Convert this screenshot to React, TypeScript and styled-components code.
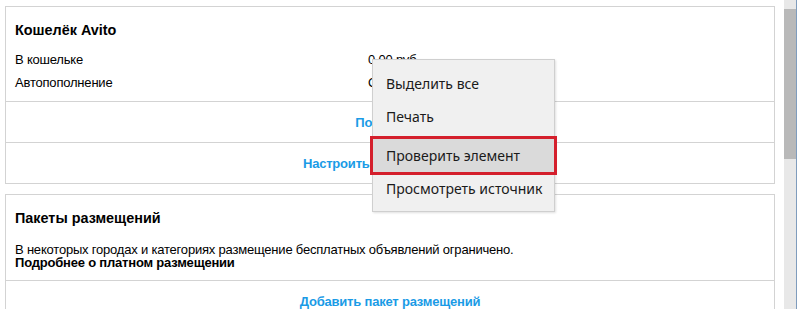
import React from 'react'
import styled, { createGlobalStyle } from 'styled-components'

const GlobalStyle = createGlobalStyle`
    html, body {
        margin: 0;
        padding: 0;
        background: #ffffff;
        overflow: hidden;
    }
    body {
        font-family: "Liberation Sans", Arial, sans-serif;
        font-size: 13px;
        letter-spacing: -0.2px;
        color: #000000;
    }
`

const colors = {
    border: '#d3d3d3',
    link: '#1a9be6',
    text: '#000000',
    menuBg: '#f0f0f0',
    menuBorder: '#cfcfcf',
    hover: '#dadada',
    red: '#d41f2c',
}

interface WalletRow {
    label: string
    value: string
}

const walletRows: WalletRow[] = [
    { label: 'В кошельке', value: '0.00 руб.' },
    { label: 'Автопополнение', value: 'Отключено' },
]

interface MenuEntry {
    text: string
    active?: boolean
    gapBefore?: boolean
}

const menuEntries: MenuEntry[] = [
    { text: 'Выделить все' },
    { text: 'Печать' },
    { text: 'Проверить элемент', active: true, gapBefore: true },
    { text: 'Просмотреть источник' },
]

const App: React.FC = () => {
    return (
        <>
            <GlobalStyle />
            <StyledWindow>
                <StyledPage>
                    <StyledCard>
                        <StyledCardBody>
                            <StyledCardTitle>Кошелёк Avito</StyledCardTitle>
                            {walletRows.map((row) => (
                                <StyledInfoRow key={row.label}>
                                    <span>{row.label}</span>
                                    <span>{row.value}</span>
                                </StyledInfoRow>
                            ))}
                        </StyledCardBody>
                        <StyledLinkRow>
                            <StyledLink href="#">Пополнить</StyledLink>
                        </StyledLinkRow>
                        <StyledLinkRow>
                            <StyledLink href="#">Настроить автопополнение</StyledLink>
                        </StyledLinkRow>
                    </StyledCard>
                    <StyledCard>
                        <StyledCardBody bottom={11}>
                            <StyledCardTitle>Пакеты размещений</StyledCardTitle>
                            <StyledNote>
                                В некоторых городах и категориях размещение бесплатных объявлений ограничено.
                                <br />
                                <b>Подробнее о платном размещении</b>
                            </StyledNote>
                        </StyledCardBody>
                        <StyledLinkRow>
                            <StyledLink href="#">Добавить пакет размещений</StyledLink>
                        </StyledLinkRow>
                    </StyledCard>
                </StyledPage>
                <StyledScrollbar>
                    <StyledScrollThumb />
                </StyledScrollbar>
                <StyledContextMenu>
                    {menuEntries.map((entry) => (
                        <StyledMenuItem
                            key={entry.text}
                            active={entry.active}
                            gapBefore={entry.gapBefore}
                        >
                            {entry.text}
                        </StyledMenuItem>
                    ))}
                </StyledContextMenu>
            </StyledWindow>
        </>
    )
}

const StyledWindow = styled.div`
    position: relative;
    display: flex;
    flex-direction: row;
    width: 797px;
    height: 309px;
    overflow: hidden;
`

const StyledPage = styled.div`
    flex: 1;
    display: flex;
    flex-direction: column;
    gap: 10px;
    padding: 6px 9px 0 5px;
`

const StyledCard = styled.div`
    flex-shrink: 0;
    border: 1px solid ${colors.border};
    background: #ffffff;
`

interface StyledCardBodyProps {
    bottom?: number
}

const StyledCardBody = styled.div<StyledCardBodyProps>`
    padding: 15px 9px ${(props) => (props.bottom ? props.bottom : 7)}px;
`

const StyledCardTitle = styled.div`
    font-size: 14.4px;
    font-weight: 700;
    letter-spacing: 0;
    line-height: 17px;
    margin-bottom: 9px;
`

const StyledInfoRow = styled.div`
    display: grid;
    grid-template-columns: 353px 1fr;
    line-height: 23px;
`

const StyledNote = styled.div`
    margin-top: 16px;
    line-height: 13px;

    b {
        font-weight: 700;
    }
`

const StyledLinkRow = styled.div`
    display: flex;
    align-items: center;
    justify-content: center;
    height: 40px;
    border-top: 1px solid ${colors.border};
`

const StyledLink = styled.a`
    color: ${colors.link};
    font-weight: 700;
    text-decoration: none;
`

const StyledScrollbar = styled.div`
    width: 12px;
    flex-shrink: 0;
    background: #e8e8e8;
    border-right: 1px solid #7f9cbd;
    padding-top: 9px;
`

const StyledScrollThumb = styled.div`
    height: 150px;
    background: #b9b9b9;
`

const StyledContextMenu = styled.div`
    position: absolute;
    left: 372px;
    top: 59px;
    width: 183px;
    height: 153px;
    padding: 7px 0;
    box-sizing: border-box;
    background: ${colors.menuBg};
    border: 1px solid ${colors.menuBorder};
    box-shadow: 1px 1px 2px rgba(0, 0, 0, 0.12);
    font-family: "Noto Sans", "Open Sans", sans-serif;
    font-size: 14px;
    letter-spacing: 0;
    color: #1a1a1a;
`

interface StyledMenuItemProps {
    active?: boolean
    gapBefore?: boolean
}

const StyledMenuItem = styled.div<StyledMenuItemProps>`
    display: flex;
    align-items: center;
    height: 33px;
    padding-left: 13px;
    margin-top: ${(props) => (props.gapBefore ? 6 : 0)}px;
    background: ${(props) => (props.active ? colors.hover : 'transparent')};
    outline: ${(props) => (props.active ? `3px solid ${colors.red}` : 'none')};
    white-space: nowrap;
`

export default App
